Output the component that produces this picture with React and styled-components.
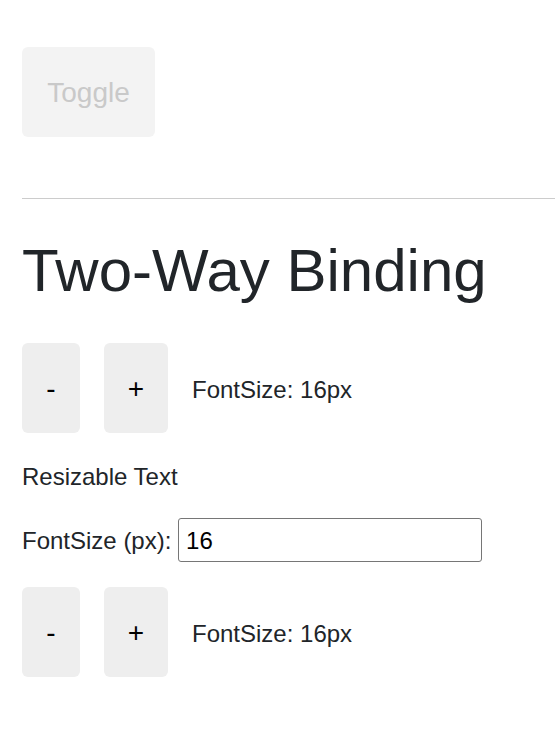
import React, { useState } from "react";
import styled, { createGlobalStyle } from "styled-components";

const Global = createGlobalStyle`
  html, body { margin: 0; padding: 0; background: #fff; }
  body { font-family: "Liberation Sans", Arial, sans-serif; color: #212529; }
  * { box-sizing: border-box; }
`;

const Page = styled.div`
  display: flex;
  flex-direction: column;
  align-items: flex-start;
  padding: 47px 0 40px 22px;
`;

const ToggleButton = styled.button`
  font-family: "Liberation Sans", Arial, sans-serif;
  font-size: 28px;
  line-height: 42px;
  width: 133px;
  height: 90px;
  padding: 2px 0 0 0;
  border: none;
  border-radius: 6px;
  background: #f3f3f3;
  color: #c9c9c9;
  cursor: default;
`;

const Divider = styled.hr`
  align-self: stretch;
  margin: 61px 0 0 0;
  border: none;
  border-top: 1px solid #cccccc;
  height: 0;
`;

const Heading = styled.h1`
  margin: 36px 0 0 0;
  font-size: 60px;
  line-height: 72px;
  font-weight: 400;
  color: #212529;
`;

const Row = styled.div`
  display: flex;
  align-items: center;
  gap: 24px;
  margin-top: ${(p) => p.$mt}px;
`;

const StepButton = styled.button`
  font-family: "Liberation Sans", Arial, sans-serif;
  font-size: 28px;
  line-height: 42px;
  width: ${(p) => p.$w}px;
  height: 90px;
  padding: 2px 0 0 0;
  border: none;
  border-radius: 6px;
  background: #eeeeee;
  color: #000;
  cursor: pointer;
`;

const Value = styled.span`
  font-size: 24px;
  line-height: 36px;
  padding-top: 4px;
  color: #212529;
`;

const Resizable = styled.p`
  margin: 26px 0 0 0;
  line-height: 36px;
  color: #212529;
  font-size: ${(p) => p.$size}px;
`;

const InputRow = styled.label`
  display: flex;
  align-items: center;
  gap: 6.7px;
  margin-top: 23px;
  font-size: 24px;
  line-height: 28px;
  color: #212529;
`;

const LabelText = styled.span`
  padding-top: 2px;
`;

const SizeInput = styled.input`
  width: 304px;
  height: 44px;
  font-family: "Liberation Sans", Arial, sans-serif;
  font-size: 24px;
  padding: 2px 7px 0 7px;
  border: 1px solid #767676;
  border-radius: 3px;
  color: #000;
  background: #fff;
  outline: none;
`;

function Counter({ size, setSize, mt }) {
  return (
    <Row $mt={mt}>
      <StepButton $w={58} onClick={() => setSize((s) => s - 1)}>-</StepButton>
      <StepButton $w={64} onClick={() => setSize((s) => s + 1)}>+</StepButton>
      <Value>FontSize: {size}px</Value>
    </Row>
  );
}

export default function App() {
  const [size, setSize] = useState(16);
  return (
    <>
      <Global />
      <Page>
        <ToggleButton disabled>Toggle</ToggleButton>
        <Divider />
        <Heading>Two-Way Binding</Heading>
        <Counter size={size} setSize={setSize} mt={36} />
        <Resizable $size={24}>Resizable Text</Resizable>
        <InputRow>
          <LabelText>FontSize (px):</LabelText>
          <SizeInput
            value={size}
            onChange={(e) => setSize(Number(e.target.value) || 0)}
          />
        </InputRow>
        <Counter size={size} setSize={setSize} mt={25} />
      </Page>
    </>
  );
}
